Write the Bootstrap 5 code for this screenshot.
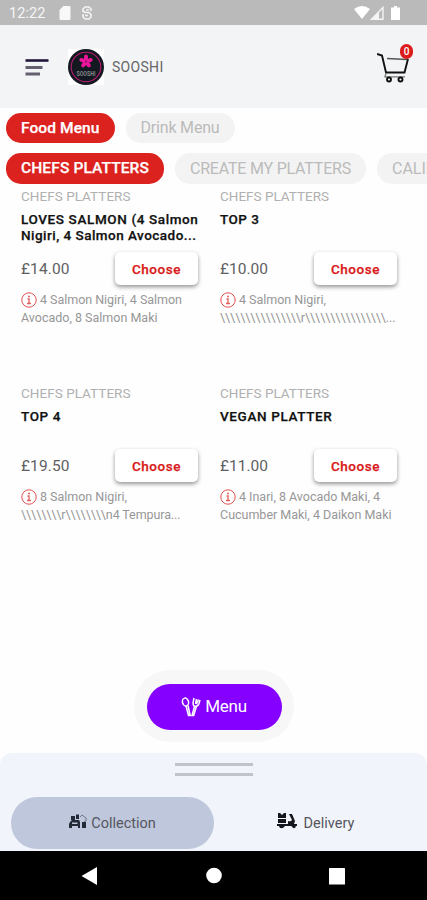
<!DOCTYPE html>
<html lang="en">
<head>
<meta charset="utf-8">
<meta name="viewport" content="width=device-width, initial-scale=1">
<title>SOOSHI</title>
<link href="https://cdn.jsdelivr.net/npm/bootstrap@5.3.0/dist/css/bootstrap.min.css" rel="stylesheet">
<style>
body{font-family:Roboto,"Liberation Sans",sans-serif;background:#fefefe;height:900px;overflow:hidden;color:#333}
svg{display:block;flex:none}
.statusbar{height:25px;background:#bababa;color:#f6f6f6;font-size:14.5px;padding:2px 27px 0 9px}
.appbar{height:83px;background:#f2f4f6;padding:1px 14px 0 25px}
.brand{font-size:14px;color:#666;margin-left:8px}
.logo{margin-left:19px;background:#fff}
.cart{width:36px;height:46px}
.cart-count{top:0;right:0;width:13px;height:15px;background:#dc1c1c;color:#fff;font-size:10px;line-height:15px;font-weight:500}
.pills{gap:11px;padding-left:6px}
.pill{height:30px;line-height:30px;border-radius:15px;background:#f3f3f3;color:#bbb;font-size:16px;padding:0 15px;white-space:nowrap;flex:none}
.pill.on{background:#dc221f;color:#fff;font-weight:500;font-size:15.5px;-webkit-text-stroke:.25px #fff}
.row-a{margin-top:5px}
.row-b{margin-top:10px}
.row-b .pill{height:31px;line-height:31px}
.menu-grid{display:grid;grid-template-columns:177px 177px;column-gap:22px;grid-auto-rows:197px;padding:4px 0 0 21px}
.cat{font-size:13.5px;line-height:17px;color:#b0b0b0}
.dish{font-size:13.5px;line-height:16px;height:32px;margin-top:6px;font-weight:500;color:#111;-webkit-text-stroke:.25px #111;white-space:nowrap}
.buy{height:33px;margin-top:9px}
.price{font-size:15.5px;color:#606060;padding-top:2px}
.choose{width:83px;height:33px;padding:1px 0 0;border:0;border-radius:5px;background:#fff;color:#d91a1a;font-size:13.5px;font-weight:500;-webkit-text-stroke:.25px #d91a1a;box-shadow:0 2px 4px rgba(0,0,0,.42)}
.desc{font-size:12.5px;line-height:17.5px;margin-top:6px;color:#979797;white-space:nowrap}
.desc svg{width:16px;height:16px;margin-right:3px}
.w{display:inline-block}
.fab-ring{margin:88px auto 0;width:160px;height:72px;border-radius:36px;background:#f7f7f7;padding:1px 0 0 1px}
.fab{width:135px;height:46px;border-radius:23px;background:#8500ff;color:#fff;font-size:17px;gap:4px;padding:1px 0 0;border:0}
.sheet{margin-top:11px;height:98px;border-radius:12px 12px 0 0;background:#f2f4fb}
.grip{width:78px;height:3px;background:#c2c3c8}
.mode{width:203px;height:52px;border-radius:26px;padding-top:2px;font-size:14.5px;color:#55565e;gap:4px}
.mode.on{background:#bfc7dd}
.navkeys{height:49px;background:#000}
</style>
<script src="https://cdn.jsdelivr.net/npm/bootstrap@5.3.0/dist/js/bootstrap.bundle.min.js"></script>
</head>
<body>
<div class="statusbar d-flex align-items-center">
  <span class="w" data-w="36.5">12:22</span>
  <svg width="12" height="14" viewBox="0 0 11 14" style="margin-left:13px;margin-top:-2px"><path d="M4 0h6q1 0 1 1v12q0 1-1 1H1q-1 0-1-1V4z" fill="#f8f8f8"/></svg>
  <svg width="10" height="14" viewBox="0 0 10 14" style="margin-left:11px;margin-top:-2px"><path d="M1 6V3l2-2h4l2 2v2M1 5l2 1.500h4L9 8.500M1 8v3l2 2h4l2-2V8M3 9.500h3M4 4h3" fill="none" stroke="#f4f4f4" stroke-width="1.600"/></svg>
  <div class="ms-auto d-flex align-items-center" style="margin-top:-2px">
    <svg width="16" height="13" viewBox="0 0 16 13"><path d="M0 3Q8-3 16 3L8 13z" fill="#fff"/></svg>
    <svg width="14" height="14" viewBox="0 0 14 14"><path d="M1.500 13.200L13 1.500v11.700z" fill="none" stroke="#f4f4f4" stroke-width="1.400"/><path d="M2 13L9 6v7z" fill="#f4f4f4"/></svg>
    <svg width="9" height="14" viewBox="0 0 9 14" style="margin-left:7px"><path d="M3 0h3v1.500h3V14H0V1.500h3z" fill="#fff"/></svg>
  </div>
</div>
<header class="appbar d-flex align-items-center">
  <svg width="24" height="18" viewBox="0 0 24 18"><path d="M.5 2.500h23" stroke="#21153d" stroke-width="2.600"/><path d="M.5 9.500h17M.5 16h14.500" stroke="#65606f" stroke-width="2.800"/></svg>
  <svg class="logo" width="36" height="36" viewBox="0 0 36 36">
    <circle cx="18" cy="18" r="18" fill="#141820"/><circle cx="18" cy="18" r="14.800" fill="none" stroke="#b31e70" stroke-width="1.100"/>
    <g fill="#ec169a"><ellipse cx="18" cy="8.800" rx="2" ry="3.200"/><ellipse cx="18" cy="8.800" rx="2" ry="3.200" transform="rotate(72 18 12.500)"/><ellipse cx="18" cy="8.800" rx="2" ry="3.200" transform="rotate(144 18 12.500)"/><ellipse cx="18" cy="8.800" rx="2" ry="3.200" transform="rotate(216 18 12.500)"/><ellipse cx="18" cy="8.800" rx="2" ry="3.200" transform="rotate(288 18 12.500)"/></g>
    <circle cx="18" cy="12.500" r="1" fill="#8c1260"/>
    <text x="18" y="26.500" text-anchor="middle" textLength="19" lengthAdjust="spacingAndGlyphs" font-size="8" font-weight="700" fill="#85888b">SOOSHI</text>
  </svg>
  <span class="brand"><span class="w" data-w="51.5">SOOSHI</span></span>
  <div class="cart ms-auto position-relative">
    <svg width="36" height="46" viewBox="0 0 36 46" fill="none" stroke="#111"><path d="M0 10l5 1.500L9 28.500h18.500L31 15" stroke-width="1.900"/><path d="M10 14.500L30 15.500" stroke="#555" stroke-width="1.700"/><path d="M9 29.500l-1 3.300h20" stroke="#777" stroke-width="1.300"/><circle cx="12" cy="35.500" r="2" stroke-width="1.900"/><circle cx="23.500" cy="35.500" r="2" stroke-width="1.900"/></svg>
    <span class="cart-count position-absolute rounded-pill text-center">0</span>
  </div>
</header>
<nav class="pills row-a d-flex"><span class="pill on"><span class="w" data-w="78.5">Food Menu</span></span><span class="pill"><span class="w" data-w="79">Drink Menu</span></span></nav>
<nav class="pills row-b d-flex overflow-hidden"><span class="pill on"><span class="w" data-w="128">CHEFS PLATTERS</span></span><span class="pill"><span class="w" data-w="161">CREATE MY PLATTERS</span></span><span class="pill">CALIFORNIA ROLLS</span></nav>
<main class="menu-grid">
  <article>
    <div class="cat"><span class="w" data-w="109.5">CHEFS PLATTERS</span></div>
    <div class="dish"><span class="w" data-w="177.5">LOVES SALMON (4 Salmon</span><br><span class="w" data-w="175.5">Nigiri, 4 Salmon Avocado...</span></div>
    <div class="buy d-flex align-items-center justify-content-between"><span class="price"><span class="w" data-w="48.5">£14.00</span></span><button class="btn choose"><span class="w" data-w="49">Choose</span></button></div>
    <div class="desc"><div class="d-flex align-items-center"><svg viewBox="0 0 16 16"><use href="#info"/></svg><span class="w" data-w="142">4 Salmon Nigiri, 4 Salmon</span></div><span class="w" data-w="136.5">Avocado, 8 Salmon Maki</span></div>
  </article>
  <article>
    <div class="cat"><span class="w" data-w="109">CHEFS PLATTERS</span></div>
    <div class="dish"><span class="w" data-w="39.5">TOP 3</span></div>
    <div class="buy d-flex align-items-center justify-content-between"><span class="price"><span class="w" data-w="48">£10.00</span></span><button class="btn choose"><span class="w" data-w="49">Choose</span></button></div>
    <div class="desc"><div class="d-flex align-items-center"><svg viewBox="0 0 16 16"><use href="#info"/></svg><span class="w" data-w="87">4 Salmon Nigiri,</span></div><span class="w" data-w="175.500">\\\\\\\\\\\\\\\\r\\\\\\\\\\\\\\\\...</span></div>
  </article>
  <article>
    <div class="cat"><span class="w" data-w="109.5">CHEFS PLATTERS</span></div>
    <div class="dish"><span class="w" data-w="40">TOP 4</span></div>
    <div class="buy d-flex align-items-center justify-content-between"><span class="price"><span class="w" data-w="48.5">£19.50</span></span><button class="btn choose"><span class="w" data-w="49">Choose</span></button></div>
    <div class="desc"><div class="d-flex align-items-center"><svg viewBox="0 0 16 16"><use href="#info"/></svg><span class="w" data-w="87">8 Salmon Nigiri,</span></div><span class="w" data-w="159.500">\\\\\\\\r\\\\\\\\n4 Tempura...</span></div>
  </article>
  <article>
    <div class="cat"><span class="w" data-w="109">CHEFS PLATTERS</span></div>
    <div class="dish"><span class="w" data-w="112.5">VEGAN PLATTER</span></div>
    <div class="buy d-flex align-items-center justify-content-between"><span class="price"><span class="w" data-w="48">£11.00</span></span><button class="btn choose"><span class="w" data-w="49">Choose</span></button></div>
    <div class="desc"><div class="d-flex align-items-center"><svg viewBox="0 0 16 16"><use href="#info"/></svg><span class="w" data-w="141">4 Inari, 8 Avocado Maki, 4</span></div><span class="w" data-w="171.500">Cucumber Maki, 4 Daikon Maki</span></div>
  </article>
</main>
<div class="fab-ring d-flex align-items-center justify-content-center">
  <button class="fab d-flex align-items-center justify-content-center">
    <svg width="20" height="20" viewBox="0 0 20 20" fill="none" stroke="#fff" stroke-width="1.500"><ellipse cx="4.500" cy="5" rx="3" ry="4" transform="rotate(-14 4.500 5)"/><path d="M5 9l2.500 9.500h1.700L7 8.500M13 1l-1 5q0 3 2 3.500 3 0 4-3L19 3M15.500 2l-1 5M17.500 2.500L15.500 7M13.500 9.500L11 18.500h1.700L15.500 9"/></svg>
    <span class="w" data-w="41.5">Menu</span>
  </button>
</div>
<section class="sheet d-flex flex-column">
  <div class="grip mx-auto" style="margin-top:10px"></div>
  <div class="grip mx-auto" style="margin-top:7px"></div>
  <div class="d-flex" style="margin:21px 0 0 11px">
    <div class="mode on d-flex align-items-center justify-content-center">
      <svg width="18" height="17" viewBox="0 0 18 17" fill="#252a38" style="margin-top:-6px"><path d="M2 3h4v4H2zM7 1.500h3V6H7zM1 9l2-2h7l1 2v6H9v-2H3v2H0v-4z"/><path d="M3 9.500h5.500v1.500H3z" fill="#bfc7dd"/><path d="M11 4l2-2 4 3v3l-2 1" fill="none" stroke="#6f7688"/><path d="M13 9h4v6h-4z"/></svg>
      <span class="w" data-w="64.5">Collection</span>
    </div>
    <div class="mode d-flex align-items-center justify-content-center">
      <svg width="21" height="18" viewBox="0 0 21 18" style="margin-right:2px;margin-top:-6px"><path d="M1 1h2l2 2 2-2h2v5H1zM1 7h8v4H1zM0 12h11V9q3 1 4-1L12 2h3l3 7-1 3h3v2h-2l-2 1-2-1H8l-2 2H3l-1-2H0z" fill="#16171c"/><circle cx="4.500" cy="14.500" r="1.700" fill="#16171c"/><circle cx="17" cy="14.500" r="1.700" fill="#16171c"/></svg>
      <span class="w" data-w="51">Delivery</span>
    </div>
  </div>
</section>
<div class="navkeys d-flex align-items-center">
  <svg width="427" height="49" viewBox="0 0 427 49" fill="#fff"><path d="M97 16v18L81.500 25z"/><circle cx="214" cy="24.500" r="7.800"/><rect x="329" y="17" width="16" height="16.500" rx=".6"/></svg>
</div>
<svg width="0" height="0"><defs><symbol id="info" viewBox="0 0 16 16"><circle cx="8" cy="8" r="7.200" fill="#fff" stroke="#e0514f" stroke-width="1"/><path d="M6.500 7H8v4M6 11.500h4" fill="none" stroke="#e0605c" stroke-width="1.300"/><circle cx="8" cy="4.500" r="1" fill="#e0605c"/></symbol></defs></svg>
<script>
// Track each label out to its design width.
document.querySelectorAll('.w[data-w]').forEach(function (el) {
  var n = el.textContent.length, extra = +el.dataset.w - el.getBoundingClientRect().width;
  el.style.letterSpacing = (extra / n).toFixed(3) + 'px';
});
</script>
</body>
</html>
